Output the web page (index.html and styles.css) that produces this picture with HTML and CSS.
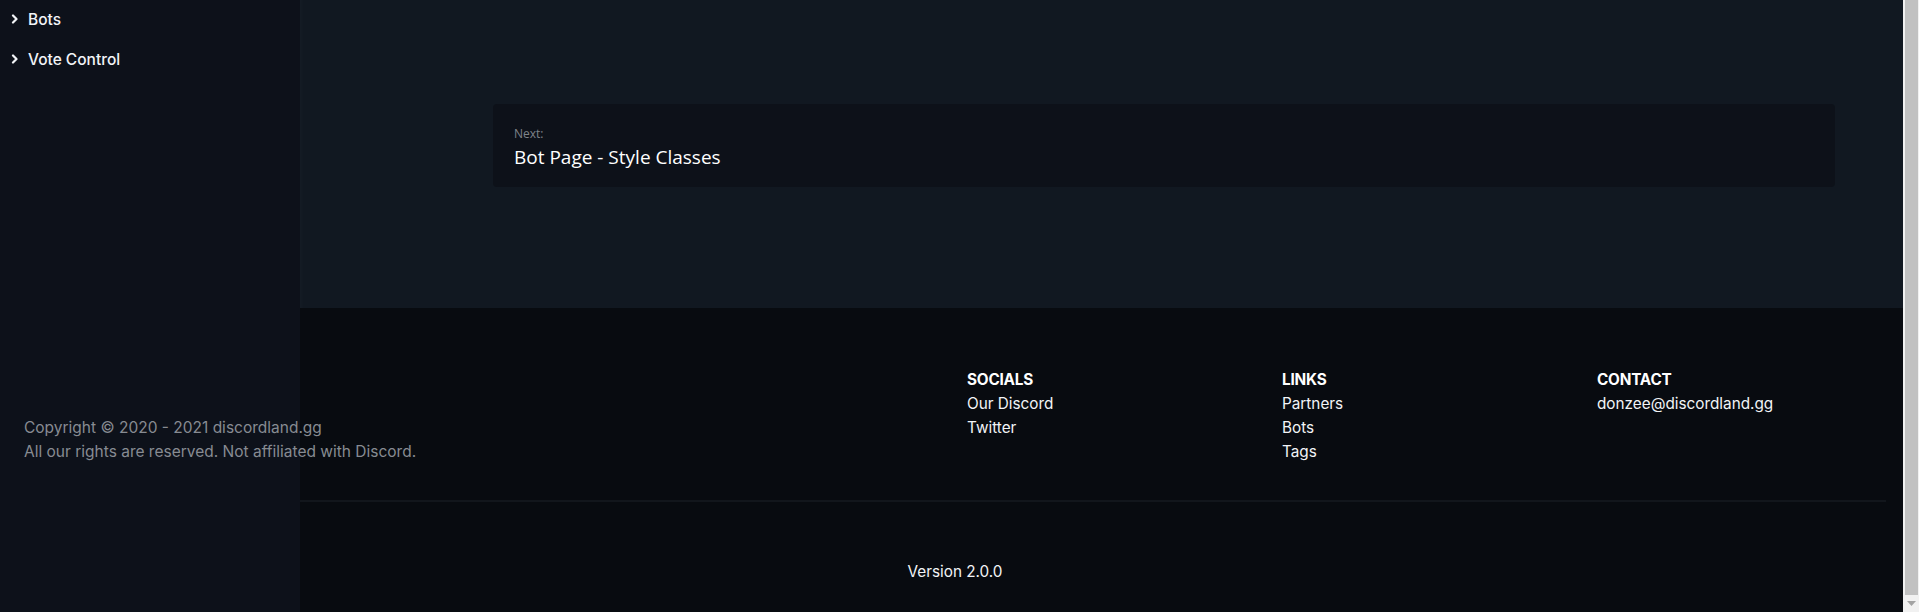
FILE: index.html
```html
<!DOCTYPE html>
<html lang="en">
<head>
<meta charset="utf-8">
<title>Docs - Bot Page</title>
<link rel="stylesheet" href="styles.css">
</head>
<body>
<div class="page">
  <aside class="sidebar">
    <ul class="nav">
      <li class="nav-item">
        <svg class="chev" width="8" height="10" viewBox="0 0 8 10"><polyline points="2,1.5 5.5,5 2,8.5" fill="none" stroke="#f2f4f7" stroke-width="2.2" stroke-linecap="round" stroke-linejoin="round"/></svg>
        <span>Bots</span>
      </li>
      <li class="nav-item">
        <svg class="chev" width="8" height="10" viewBox="0 0 8 10"><polyline points="2,1.5 5.5,5 2,8.5" fill="none" stroke="#f2f4f7" stroke-width="2.2" stroke-linecap="round" stroke-linejoin="round"/></svg>
        <span>Vote Control</span>
      </li>
    </ul>
  </aside>

  <main class="content">
    <a class="next-card" href="#">
      <span class="next-label">Next:</span>
      <span class="next-title">Bot Page - Style Classes</span>
    </a>
  </main>

  <div class="footer-bg"></div>

  <footer class="footer">
    <div class="footer-top">
      <div class="copyright">
        <p>Copyright © 2020 - 2021 discordland.gg</p>
        <p>All our rights are reserved. Not affiliated with Discord.</p>
      </div>
      <div class="fcol">
        <h4>SOCIALS</h4>
        <a href="#">Our Discord</a>
        <a href="#">Twitter</a>
      </div>
      <div class="fcol">
        <h4>LINKS</h4>
        <a href="#">Partners</a>
        <a href="#">Bots</a>
        <a href="#">Tags</a>
      </div>
      <div class="fcol">
        <h4>CONTACT</h4>
        <a href="#">donzee@discordland.gg</a>
      </div>
    </div>
    <div class="divider"></div>
    <div class="version">Version 2.0.0</div>
  </footer>

  <div class="scrollbar">
    <div class="thumb"></div>
    <div class="arrow"><svg width="9" height="5" viewBox="0 0 9 5"><polygon points="0,0 9,0 4.5,5" fill="#a3a3a3"/></svg></div>
  </div>
</div>
</body>
</html>
```

FILE: styles.css
```css
* { box-sizing: border-box; }
html, body { margin: 0; padding: 0; height: 100%; overflow: hidden; }
body {
  background: #080b10;
  font-family: "Inter", "Liberation Sans", sans-serif;
  color: #f2f4f7;
}
.page {
  display: grid;
  grid-template-columns: 300px 1fr 16px;
  grid-template-rows: 308px 304px;
  height: 612px;
}
.sidebar {
  grid-column: 1;
  grid-row: 1 / 3;
  background: #0d111a;
}
.nav {
  list-style: none;
  margin: -1px 0 0 0;
  padding: 0;
}
.nav-item {
  display: flex;
  align-items: center;
  height: 40px;
  padding-left: 11px;
  font-size: 15.5px;
  font-weight: 500;
  color: #f2f4f7;
}
.chev { margin-right: 9px; }

.content {
  grid-column: 2;
  grid-row: 1;
  background: #111821;
  padding: 104px 68px 0 193px;
  box-shadow: inset 4px 0 4px -3px rgba(255,255,255,0.03);
}
.next-card {
  display: flex;
  flex-direction: column;
  background: #0d1119;
  border-radius: 4px;
  padding: 22px 21px 17px;
  height: 83px;
  text-decoration: none;
  font-family: "Open Sans", "Noto Sans", sans-serif;
}
.next-label {
  font-size: 12px;
  line-height: 16px;
  color: #7f838a;
}
.next-title {
  font-size: 19px;
  line-height: 28px;
  margin-top: 1px;
  color: #ffffff;
}

.footer-bg {
  grid-column: 2;
  grid-row: 2;
  background: #080b10;
}
.footer {
  grid-column: 1 / 3;
  grid-row: 2;
  position: relative;
  padding: 60px 17px 0 24px;
}
.footer-top {
  display: grid;
  grid-template-columns: 943px 315px 315px 1fr;
  height: 132px;
}
.copyright {
  margin-top: 48px;
  color: #878b92;
  font-size: 15.5px;
  line-height: 24px;
}
.copyright p { margin: 0; }
.fcol {
  display: flex;
  flex-direction: column;
  font-size: 15.3px;
  line-height: 24px;
}
.fcol h4 {
  margin: 0;
  font-size: 15.3px;
  font-weight: 700;
  line-height: 24px;
  letter-spacing: -0.2px;
  color: #ffffff;
}
.fcol a {
  color: #f2f4f7;
  text-decoration: none;
}
.divider {
  height: 2px;
  margin-left: 276px;
  background: #12161c;
}
.version {
  margin-top: 58px;
  text-align: center;
  font-size: 15.3px;
  line-height: 24px;
  color: #f2f4f7;
}

.scrollbar {
  grid-column: 3;
  grid-row: 1 / 3;
  background: #f1f1f1;
  display: flex;
  flex-direction: column;
  padding-left: 2px;
}
.thumb {
  flex: 1;
  background: #c1c1c1;
  margin-right: 1px;
}
.arrow {
  height: 17px;
  display: flex;
  align-items: center;
  justify-content: center;
  margin-left: -2px;
}
```
